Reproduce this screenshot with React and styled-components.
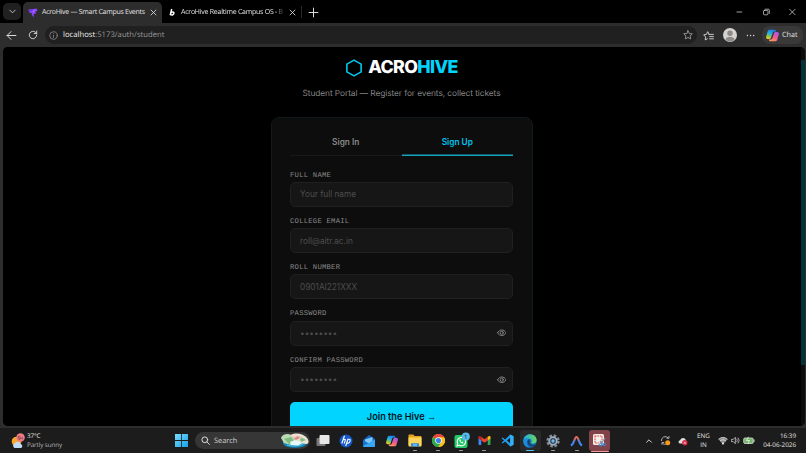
import React, { useState } from 'react'
import styled, { createGlobalStyle } from 'styled-components'

const GlobalStyle = createGlobalStyle`
    * { box-sizing: border-box; }
    body {
        margin: 0;
        background: #000;
        overflow: hidden;
    }
    button, input { font: inherit; }
`

const Desktop = styled.div`
    width: 806px;
    height: 453px;
    display: flex;
    flex-direction: column;
    background: #2d2d2d;
    font-family: "Open Sans", "Noto Sans", sans-serif;
    font-size: 7.2px;
    color: #e4e4e4;
    overflow: hidden;
    white-space: nowrap;
    text-rendering: geometricPrecision;
`

/* browser frame */

const TabStrip = styled.div`
    height: 23px;
    flex: none;
    display: flex;
    background: #000;
    padding-left: 3px;
`

const TabMenu = styled.div`
    width: 18px;
    height: 17px;
    margin-top: 3px;
    border-radius: 5px;
    background: #202020;
    display: flex;
    align-items: center;
    justify-content: center;
`

const Tab = styled.div`
    width: ${props => props.$width}px;
    height: 21px;
    margin: 2px 0 0 ${props => (props.$active ? 2 : 0)}px;
    padding: 0 5px 0 ${props => (props.$active ? 5 : 7)}px;
    border-radius: 5px 5px 0 0;
    background: ${props => (props.$active ? '#2d2d2d' : 'transparent')};
    display: flex;
    align-items: center;
    gap: 4px;
`

const TabTitle = styled.div`
    flex: 1;
    font-size: 7px;
    line-height: 12px;
    letter-spacing: ${props => props.$spacing}px;
    ${props => props.$fade && 'margin-left: 1px; mask-image: linear-gradient(90deg, #000 88%, rgba(0, 0, 0, 0.1));'}
`

const NewTab = styled.div`
    width: 24px;
    height: 12px;
    margin-top: 6px;
    border-left: 1px solid #292929;
    display: flex;
    align-items: center;
    justify-content: center;
`

const WindowButtons = styled.div`
    margin-left: auto;
    display: flex;
    align-items: center;

    svg { width: 26.7px; }
`

const Toolbar = styled.div`
    height: 24px;
    flex: none;
    display: flex;
    align-items: center;
    padding: 0 3px 0 6px;
    background: #2d2d2d;
`

const NavIcon = styled.div`
    width: ${props => props.$width || 21}px;
    display: flex;
    align-items: center;
    justify-content: center;
`

const AddressBar = styled.div`
    width: 652px;
    height: 18px;
    margin-left: -3px;
    padding: 0 4px 0 4px;
    border-radius: 9px;
    background: #202020;
    display: flex;
    align-items: center;
    gap: 5px;
    font-size: 7.7px;
    line-height: 12px;
    color: #999;

    b { font-weight: 400; color: #eee; }
    svg:last-child { margin-left: auto; }
`

const ChatPill = styled.div`
    width: 41px;
    height: 18px;
    margin-left: auto;
    border-radius: 8px;
    background: #393939;
    display: flex;
    align-items: center;
    gap: 3px;
    padding-left: 4px;
    font-size: 7.2px;
`

const PageFrame = styled.div`
    height: 379px;
    flex: none;
    margin: 0 1px 0 3px;
    border-radius: 5px;
    overflow: hidden;
    display: flex;
    background: #000;
`

const Scrollbar = styled.div`
    width: 4px;
    padding-top: 13px;
    background: #0c0c0c;

    &::before {
        content: '';
        display: block;
        height: 305px;
        background: #02333b;
    }
`

/* sign up page */

const Page = styled.main`
    flex: 1;
    height: 379px;
    display: flex;
    flex-direction: column;
    align-items: center;
    padding: 11px 1px 0 0;
    background: #000;
    font-family: Inter, sans-serif;
`

const Brand = styled.h1`
    margin: 0;
    height: 20px;
    display: flex;
    align-items: center;
    gap: 5px;
    font-size: 17.8px;
    line-height: 20px;
    font-weight: 800;
    letter-spacing: -0.62px;
    color: #fff;

    span span { color: #00d4ff; }
`

const Tagline = styled.p`
    margin: 11px 0 0;
    height: 10px;
    line-height: 10px;
    font-size: 8.35px;
    letter-spacing: -0.08px;
    color: #858585;
`

const Card = styled.form`
    width: 262px;
    height: 330px;
    flex: none;
    margin-top: 18px;
    padding: 10px 18.5px 0;
    border: 1px solid #10191b;
    border-radius: 8px;
    background: #0d0d0d;
`

const FormTabs = styled.div`
    display: grid;
    grid-template-columns: 1fr 1fr;
    height: 28px;
    margin-bottom: 15.5px;
`

const FormTab = styled.button`
    border: 0;
    box-shadow: inset 0 ${props => (props.$active ? '-1.5px #12a3bd' : '-1px #191919')};
    padding: 0;
    background: none;
    color: ${props => (props.$active ? '#00c4ec' : '#888')};
    font-size: 8.3px;
    font-weight: 600;
`

const Field = styled.label`
    display: block;
    height: 46.3px;
`

const FieldLabel = styled.div`
    height: 10.3px;
    line-height: 8px;
    font-family: "Liberation Mono", monospace;
    font-size: 7.2px;
    letter-spacing: 0.25px;
    text-transform: uppercase;
    color: #898989;
`

const InputBox = styled.div`
    height: 25px;
    display: flex;
    align-items: center;
    padding: 0 6px 0 9px;
    border: 1px solid #202020;
    border-radius: 5px;
    background: #161616;
`

const Input = styled.input`
    flex: 1;
    min-width: 0;
    border: 0;
    padding: 0;
    outline: 0;
    background: none;
    color: #ddd;
    font-size: 8.25px;

    &::placeholder { color: #4d4d4d; opacity: 1; }
`

const Submit = styled.button`
    width: 100%;
    height: 29px;
    margin-top: -1px;
    border: 0;
    border-radius: 5px;
    background: #00d4ff;
    color: #001115;
    font-size: 9.2px;
    font-weight: 600;
`

const Arrow = styled.span`
    font-family: "Liberation Sans", sans-serif;
    font-weight: 400;
    font-size: 9.2px;
`

/* taskbar */

const Taskbar = styled.footer`
    height: 25px;
    flex: none;
    margin-top: 2px;
    display: flex;
    align-items: center;
    background: #1c1c1c;
    font-size: 6.3px;
    line-height: 8.4px;
`

const Weather = styled.div`
    width: 170px;
    padding-left: 11px;
    display: flex;
    align-items: center;
    gap: 2px;
    letter-spacing: -0.1px;
`

const Muted = styled.div`
    color: #b5b5b5;
`

const StartButton = styled.div`
    width: 25px;
    display: flex;
    justify-content: center;
    padding-right: 2px;
`

const Search = styled.div`
    width: 115px;
    height: 17px;
    padding: 0 1px 0 6px;
    border-radius: 9px;
    background: #363636;
    display: flex;
    align-items: center;
    gap: 4px;
    font-size: 7.4px;
    line-height: 10px;
    color: #d0d0d0;

    svg:last-child { margin-left: auto; }
`

const Apps = styled.div`
    display: grid;
    grid-template-columns: repeat(13, 23.05px);
    margin-left: 1.5px;
`

const TaskApp = styled.div`
    height: 25px;
    display: flex;
    align-items: center;
    justify-content: center;
    position: relative;

    &::after {
        content: '';
        position: absolute;
        bottom: ${props => (props.$state === 'focus' ? 1 : 2)}px;
        width: ${props => ({ open: 4, active: 8, focus: 18 }[props.$state] || 0)}px;
        height: 1.5px;
        border-radius: 1px;
        background: ${props => ({ open: '#9b9b9b', active: '#4cc2ff', focus: '#f59a9e' }[props.$state])};
    }
`

const AppPlate = styled.div`
    width: 21px;
    height: 21px;
    border-radius: 3px;
    background: ${props => props.$color || 'transparent'};
    display: flex;
    align-items: center;
    justify-content: center;
`

const Tray = styled.div`
    margin-left: auto;
    padding-right: 10px;
    display: flex;
    align-items: center;
`

const Language = styled.div`
    width: 20px;
    margin: 0 3.5px;
    text-align: center;
`

const Clock = styled.div`
    width: 39px;
    text-align: right;
`

const Line = ({ size = 10, box = 10, d, color = '#ddd', width = 0.9, children }) => (
    <svg width={size} height={size} viewBox={`0 0 ${box} ${box}`} fill="none" stroke={color} strokeWidth={width} strokeLinecap="round" strokeLinejoin="round">
        {d && <path d={d} />}
        {children}
    </svg>
)

const Close = () => <Line size={7} d="M1.5 1.5l7 7M8.5 1.5l-7 7" width={1.2} />

const Copilot = ({ size = 13, id }) => (
    <svg width={size} height={size} viewBox="0 0 14 14">
        <defs>
            <linearGradient id={`${id}a`} x1="0.6" y1="0" x2="0.3" y2="1">
                <stop offset="0" stopColor="#1b7df0" />
                <stop offset="0.45" stopColor="#27b5da" />
                <stop offset="0.75" stopColor="#8fc648" />
                <stop offset="1" stopColor="#f7c52b" />
            </linearGradient>
            <linearGradient id={`${id}b`} x1="0.7" y1="0" x2="0.3" y2="1">
                <stop offset="0" stopColor="#a55bea" />
                <stop offset="0.5" stopColor="#ee5598" />
                <stop offset="1" stopColor="#ff9a55" />
            </linearGradient>
        </defs>
        <path d="M4 .8h5.200c1.200 0 1.500.8 1.800 2H8.800C7.700 2.800 7.300 3.600 7 4.600L5.600 9c-.4 1.200-.8 1.800-2 1.800H2C.5 10.800-.2 9.400.2 8L1.800 2.700C2.200 1.400 2.800.8 4 .8z" fill={`url(#${id}a)`} />
        <path d="M10 13.200H4.800c-1.200 0-1.500-.8-1.800-2h2.200c1.100 0 1.500-.8 1.800-1.800L8.400 5c.4-1.200.8-1.800 2-1.800H12c1.500 0 2.200 1.400 1.800 2.800L12.200 11.300c-.4 1.300-1 1.900-2.200 1.900z" fill={`url(#${id}b)`} />
    </svg>
)

const Favicon = () => (
    <svg width="10" height="10" viewBox="0 0 10 10">
        <path d="M.4 1.800L8.600.5 9.500 3 7.200 3.600 8.200 5.200 5.600 6.200 5.900 9.600 3.500 6.600 4 5 1.700 4.900z" fill="#8b45ff" />
        <path d="M.4 1.800L5 1.100 3.800 3.400 1.500 4z" fill="#6b3be8" />
        <path d="M4.500 2.900l3.600-.7-2.300 2z" fill="#b66bff" />
    </svg>
)

const BoltIcon = () => (
    <svg width="7" height="9" viewBox="0 0 7 9">
        <path d="M2.700 1L1.200 7.200M1.700 5.200C2.600 3.600 5.100 3.300 4.900 5.200 4.700 7.200 2.300 7.700 1.600 6.200" fill="none" stroke="#fff" strokeWidth="1.500" />
    </svg>
)

const Eye = () => (
    <Line size={9.5} box={24} width={2.4} color="#858585">
        <path d="M1.500 12C5.500 2.500 18.500 2.500 22.500 12 18.500 21.500 5.500 21.500 1.500 12z" />
        <circle cx="12" cy="12" r="4" />
    </Line>
)

const WeatherIcon = () => (
    <svg width="14" height="16" viewBox="0 0 14 16">
        <circle cx="5.500" cy="8.500" r="4.800" fill="#f7a72c" />
        <path d="M3.500 15a2.500 2.500 0 0 1 0-4.500 3.500 3.500 0 0 1 6.200.5 2.100 2.100 0 0 1 .3 4z" fill="#bfdcf7" />
        <circle cx="9.500" cy="4.500" r="4.300" fill="#ef7b83" />
        <text x="9.500" y="6.600" fontSize="5.500" textAnchor="middle" fill="#38191c">9+</text>
    </svg>
)

const WindowsLogo = () => (
    <svg width="13" height="13" viewBox="0 0 13 13">
        <defs>
            <linearGradient id="win" x2="1" y2="1">
                <stop stopColor="#79dcfb" />
                <stop offset="1" stopColor="#169fe8" />
            </linearGradient>
        </defs>
        <path d="M0 0h6.100v6.100H0zM6.900 0H13v6.100H6.900zM0 6.900h6.100V13H0zM6.900 6.900H13V13H6.900z" fill="url(#win)" />
    </svg>
)

const SearchArt = () => (
    <svg width="28" height="15" viewBox="0 0 28 15">
        <ellipse cx="14" cy="10" rx="12" ry="4.800" fill="#1387b8" />
        <path d="M0 5C1 1 7 0 10 2l5 6-5 4-7-2z" fill="#b9dcb5" />
        <path d="M10 2c5-3 13-1 16 3 2 3 2 5 0 6l-9-1z" fill="#e9e4d2" />
        <path d="M3 6l7-2 4 5-6 2zM18 3l7 4-5 2z" fill="#7fbb80" />
        <path d="M9 2l5-1 7 4-5 2z" fill="#f7d7cf" />
        <path d="M13 5l4-2 2 2-4 2z" fill="#e08a80" />
        <path d="M9 9l5-2 7 3-4 3-7-1z" fill="#e8f7fa" />
        <path d="M6 12c4 1 11 2 16-1" stroke="#55c9e6" fill="none" />
    </svg>
)

const TaskView = () => (
    <svg width="14" height="13" viewBox="0 0 14 13">
        <rect x="0.500" y="4" width="9" height="8" rx="1" fill="#777" />
        <rect x="3.500" y="1" width="10" height="9" rx="1" fill="#e7e7e7" />
    </svg>
)

const Hp = () => (
    <svg width="14" height="14" viewBox="0 0 14 14">
        <circle cx="7" cy="7" r="6.500" fill="#1458c8" />
        <path d="M5.500 1.800L2.800 9.500M4.200 5.800C6.500 4.500 6.600 5.500 6.200 6.600L5.200 9.500M9 5L6.700 12M8.800 5.300h1.400c1.200 0 1.100.8.8 1.800-.5 1.700-.8 2-1.800 2H7.800" fill="none" stroke="#fff" strokeWidth="1.100" />
    </svg>
)

const Mail = () => (
    <svg width="14" height="14" viewBox="0 0 14 14">
        <path d="M1 6l6-5 6 4v7.500H1z" fill="#1264c4" />
        <path d="M3 5.500l7.500-2.500v6H3z" fill="#7cc8f8" />
        <path d="M1 6l6 3.500L13 5.500v6c0 1-.5 1.500-1.500 1.500h-9C1.500 13 1 12.500 1 11.500z" fill="#1673d2" />
        <path d="M1 12l6-3 6-3.500v6c0 1-.5 1.500-1.500 1.500h-9C1.700 13 1.200 12.600 1 12z" fill="#38a6f2" />
    </svg>
)

const Folder = () => (
    <svg width="14" height="13" viewBox="0 0 14 13">
        <path d="M.5 1.500c0-.6.300-1 1-1h3.700L6.600 2h6c.6 0 .9.300.9.900V11H.5z" fill="#e5a51e" />
        <path d="M.5 3.500h13v8c0 .6-.3 1-1 1h-11c-.7 0-1-.4-1-1z" fill="#ffd45c" />
        <path d="M3 12.500V10.200c0-.7.300-1 1-1h6c.7 0 1 .3 1 1v2.300z" fill="#258cdb" />
        <path d="M5 11h4" stroke="#d8efff" strokeWidth="0.800" />
    </svg>
)

const Chrome = () => (
    <svg width="13" height="13" viewBox="0 0 24 24">
        <circle cx="12" cy="12" r="12" fill="#fbc116" />
        <path d="M12 12L1.600 6A12 12 0 0 1 22.400 6z" fill="#e8453c" />
        <path d="M1.600 6A12 12 0 0 0 12 24l5.200-9L12 12z" fill="#2da94f" />
        <path d="M12 6h10.400A12 12 0 0 1 12 24l5.200-9z" fill="#fbc116" />
        <circle cx="12" cy="12" r="6" fill="#fff" />
        <circle cx="12" cy="12" r="4.700" fill="#3a7ee8" />
    </svg>
)

const WhatsApp = () => (
    <svg width="18" height="18" viewBox="0 0 18 18" overflow="visible">
        <rect x="2.500" y="3" width="13" height="13" rx="2" fill="#21c865" />
        <path d="M5 14l.7-2.400a4.200 4.200 0 1 1 1.700 1.700z" fill="none" stroke="#fff" strokeWidth="1.100" />
        <path d="M7.200 8c.4 1.800 1.600 3 3.500 3.400l.8-1-1.300-.8-.6.6-1.200-1.300.5-.6-.7-1.200z" fill="#fff" />
        <circle cx="13.800" cy="4.500" r="4" fill="#55bbea" />
        <text x="13.800" y="6.700" fontSize="6" textAnchor="middle" fill="#12313e">1</text>
    </svg>
)

const Gmail = () => (
    <svg width="13" height="11" viewBox="0 0 13 11">
        <path d="M.5 2.500L3.300 4.500V10H1.500c-.6 0-1-.4-1-1z" fill="#4285f4" />
        <path d="M12.500 2.500L9.700 4.500V10h1.800c.6 0 1-.4 1-1z" fill="#34a853" />
        <path d="M3.300 1.800L6.500 4.300 9.700 1.800v3.600L6.500 7.800 3.300 5.400z" fill="#ea4335" />
        <path d="M.5 2.300C.5.800 2 .500 3.300 1.800v3.600L.5 3.400z" fill="#c5221f" />
        <path d="M12.500 2.300C12.500.8 11 .5 9.700 1.800v3.600l2.800-2z" fill="#fbbc04" />
    </svg>
)

const VsCode = () => (
    <svg width="13" height="13" viewBox="0 0 24 24">
        <path d="M17 1l6 3v16l-6 3L7.500 14 3 17.500 1 16.300 5.500 12 1 7.700 3 6.500 7.500 10zM17 7l-6.200 5 6.200 5z" fill="#239cea" fillRule="evenodd" />
        <path d="M17 1l6 3v16l-6 3z" fill="#36b0f5" />
    </svg>
)

const Edge = () => (
    <svg width="14" height="14" viewBox="0 0 24 24">
        <defs>
            <linearGradient id="edgeTop" x2="1">
                <stop stopColor="#25a9e5" />
                <stop offset="1" stopColor="#65d95c" />
            </linearGradient>
        </defs>
        <circle cx="12" cy="12" r="11.500" fill="#1269bd" />
        <path d="M.6 11.500C1 4.500 6.500.5 12 .5c7 0 11.500 5 11.500 9.800 0 4-3 6.200-6.500 6.200-2.500 0-3.800-1-3-2.200 2-3-.6-6-4.500-6C5 8.300 1.500 10 .6 13z" fill="url(#edgeTop)" />
        <path d="M9.500 9.500C6.500 12 7.500 20 14.500 21c3 .3 5.500-1 7-3-6 2.500-12-1-10-6.500z" fill="#1c1f24" opacity="0.600" />
        <path d="M.5 12C1 7 7 6.500 10 8.500 5.500 10 5 18.500 11 23.400 4.500 23.200.2 18 .5 12z" fill="#1b8edc" />
    </svg>
)

const Gear = () => (
    <svg width="14" height="14" viewBox="0 0 24 24">
        <circle cx="12" cy="12" r="9.500" fill="none" stroke="#7e8b98" strokeWidth="4" strokeDasharray="4.500 2.960" />
        <circle cx="12" cy="12" r="6.500" fill="#33445a" stroke="#a4b1bd" strokeWidth="3" />
        <circle cx="12" cy="12" r="2.800" fill="#6cb9f2" />
    </svg>
)

const Arc = () => (
    <svg width="13" height="13" viewBox="0 0 13 13">
        <defs>
            <linearGradient id="arc" x1="0" y1="0" x2="0" y2="1">
                <stop stopColor="#f2694a" />
                <stop offset="0.350" stopColor="#a56f8b" />
                <stop offset="0.600" stopColor="#3f86f0" />
            </linearGradient>
        </defs>
        <path d="M1.700 11C4 9.500 4.600 3 6.500 3s2.500 6.500 4.800 8" fill="none" stroke="url(#arc)" strokeWidth="2.200" strokeLinecap="round" />
    </svg>
)

const Snip = () => (
    <svg width="15" height="15" viewBox="0 0 15 15">
        <rect x="1" y="1" width="11" height="11" rx="1.500" fill="#f4eeee" />
        <rect x="3" y="3" width="7" height="7" fill="none" stroke="#dc4e3d" strokeWidth="1.100" strokeDasharray="1.600 0.800" />
        <path d="M13 5l-4 6M8 8l4 4" stroke="#8195a9" strokeWidth="1.300" />
        <circle cx="8.500" cy="12" r="1.300" fill="none" stroke="#3d8cdc" />
        <circle cx="12.500" cy="11.500" r="1.300" fill="none" stroke="#3d8cdc" />
    </svg>
)

const apps = [
    { name: 'taskview', icon: <TaskView /> },
    { name: 'hp', icon: <Hp /> },
    { name: 'mail', icon: <Mail /> },
    { name: 'copilot', icon: <Copilot id="task" size={12} /> },
    { name: 'files', icon: <Folder />, state: 'open' },
    { name: 'chrome', icon: <Chrome />, state: 'open' },
    { name: 'whatsapp', icon: <WhatsApp />, state: 'open' },
    { name: 'gmail', icon: <Gmail />, state: 'open' },
    { name: 'code', icon: <VsCode /> },
    { name: 'edge', icon: <Edge />, state: 'active', plate: '#292929' },
    { name: 'settings', icon: <Gear />, state: 'open' },
    { name: 'arc', icon: <Arc />, state: 'open' },
    { name: 'snip', icon: <Snip />, state: 'focus', plate: '#81424a' },
]

const fields = [
    { label: 'Full Name', placeholder: 'Your full name' },
    { label: 'College Email', placeholder: 'roll@aitr.ac.in' },
    { label: 'Roll Number', placeholder: '0901AI221XXX' },
    { label: 'Password', placeholder: '••••••••', secret: true },
    { label: 'Confirm Password', placeholder: '••••••••', secret: true },
]

const BrowserBar = () => (
    <React.Fragment>
        <TabStrip>
            <TabMenu><Line size={9} d="M2 3.500l3 3 3-3" /></TabMenu>
            <Tab $active $width={139}>
                <Favicon />
                <TabTitle $spacing={-0.28}>AcroHive — Smart Campus Events</TabTitle>
                <Close />
            </Tab>
            <Tab $width={139}>
                <BoltIcon />
                <TabTitle $spacing={-0.25} $fade>AcroHive Realtime Campus OS - B</TabTitle>
                <Close />
            </Tab>
            <NewTab><Line size={11} d="M5 1v8M1 5h8" /></NewTab>
            <WindowButtons>
                <Line size={8} d="M2 5h6" />
                <Line size={8}>
                    <rect x="1.500" y="3" width="5.500" height="5.500" rx="1" />
                    <path d="M3.500 1.500h4c.8 0 1.200.4 1.200 1.200v4" />
                </Line>
                <Line size={8} d="M1.500 1.500l7 7M8.500 1.500l-7 7" />
            </WindowButtons>
        </TabStrip>
        <Toolbar>
            <NavIcon $width={11}><Line size={11} d="M9 5H1M4.500 1.500L1 5l3.500 3.500" /></NavIcon>
            <NavIcon $width={31}><Line size={10} d="M8.700 5A3.700 3.700 0 1 1 7.500 2.300L8.700 3.500M8.700 1v2.500H6.200" /></NavIcon>
            <AddressBar>
                <Line size={9} color="#999" width={0.8}>
                    <circle cx="5" cy="5" r="4.200" />
                    <path d="M5 4.700v2.500M5 2.900v.1" />
                </Line>
                <span><b>localhost</b>:5173/auth/student</span>
                <Line size={10} color="#aaa" width={0.8} d="M5 .7l1.300 2.800 3 .3-2.200 2.100.6 3L5 7.500 2.300 8.900l.6-3L.7 3.800l3-.3z" />
            </AddressBar>
            <NavIcon $width={22}>
                <Line size={11} width={0.8} d="M4 8L2 9l.4-2.700L.6 4.400l2.500-.4L4.300 1.500 5.500 4M5.500 4h4M6 6h3.500M6 8h3.500" />
            </NavIcon>
            <NavIcon>
                <svg width="14" height="14" viewBox="0 0 14 14">
                    <circle cx="7" cy="7" r="7" fill="#d5d2cf" />
                    <circle cx="7" cy="5.300" r="2.700" fill="#8c8986" />
                    <path d="M2.500 11.500C3 7.800 11 7.800 11.500 11.500 9 14 5 14 2.500 11.500z" fill="#8c8986" />
                </svg>
            </NavIcon>
            <NavIcon><Line size={9} width={1.4} d="M1.500 5h.1M5 5h.1M8.500 5h.1" /></NavIcon>
            <ChatPill><Copilot id="chat" size={13} />Chat</ChatPill>
        </Toolbar>
    </React.Fragment>
)

const AuthPage = () => {
    const [tab, setTab] = useState('Sign Up')

    return (
        <Page>
            <Brand>
                <svg width="18" height="18" viewBox="0 0 24 24" fill="none" stroke="#00c4ec" strokeWidth="2.200" strokeLinejoin="round">
                    <path d="M12 1.500l9.500 5.300v10.400L12 22.500l-9.500-5.300V6.800z" />
                </svg>
                <span>ACRO<span>HIVE</span></span>
            </Brand>
            <Tagline>Student Portal — Register for events, collect tickets</Tagline>
            <Card onSubmit={e => e.preventDefault()}>
                <FormTabs>
                    {['Sign In', 'Sign Up'].map(name => (
                        <FormTab type="button" key={name} $active={tab === name} onClick={() => setTab(name)}>{name}</FormTab>
                    ))}
                </FormTabs>
                {fields.map(field => (
                    <Field key={field.label}>
                        <FieldLabel>{field.label}</FieldLabel>
                        <InputBox>
                            <Input type={field.secret ? 'password' : 'text'} placeholder={field.placeholder} />
                            {field.secret && <Eye />}
                        </InputBox>
                    </Field>
                ))}
                <Submit>Join the Hive <Arrow>→</Arrow></Submit>
            </Card>
        </Page>
    )
}

const TaskbarRow = () => (
    <Taskbar>
        <Weather>
            <WeatherIcon />
            <div>
                <div>37°C</div>
                <Muted>Partly sunny</Muted>
            </div>
        </Weather>
        <StartButton><WindowsLogo /></StartButton>
        <Search>
            <Line size={9} width={1.1}>
                <circle cx="4.200" cy="4.200" r="3.200" />
                <path d="M6.600 6.600L9.300 9.300" />
            </Line>
            Search
            <SearchArt />
        </Search>
        <Apps>
            {apps.map(app => (
                <TaskApp key={app.name} $state={app.state}>
                    <AppPlate $color={app.plate}>{app.icon}</AppPlate>
                </TaskApp>
            ))}
        </Apps>
        <Tray>
            <NavIcon $width={14}><Line size={8} width={1.2} d="M2 6.500l3-3 3 3" /></NavIcon>
            <NavIcon $width={19}>
                <svg width="11" height="11" viewBox="0 0 11 11">
                    <path d="M1.500 6A3.800 3.800 0 0 1 8 2.800M9 1v2.300H6.700M2 9.800V7.500h2.300M2.300 8C3 9 4 9.500 5.500 9.500" fill="none" stroke="#bbb" strokeWidth="0.900" />
                    <circle cx="7.700" cy="7.700" r="2.500" fill="#f79a1c" />
                </svg>
            </NavIcon>
            <NavIcon $width={15}>
                <svg width="10" height="10" viewBox="0 0 10 10">
                    <path d="M2 7.500C0 7 .2 4.300 2.200 4.200 3 1.300 7 1.300 7.800 4L9 7.500z" fill="#e0e0e0" />
                    <circle cx="6.800" cy="6.800" r="2.700" fill="#d92d49" />
                    <path d="M5.900 5.900l1.800 1.800M7.700 5.900L5.900 7.700" stroke="#fff" strokeWidth="0.600" />
                </svg>
            </NavIcon>
            <Language>ENG<br />IN</Language>
            <NavIcon $width={12}>
                <svg width="10" height="9" viewBox="0 0 10 9">
                    <path d="M5 8.500L.5 3.300C3 .9 7 .9 9.500 3.300z" fill="#8b8b8b" />
                    <path d="M.5 3.300C3 .9 7 .9 9.500 3.300M2 5c1.800-1.600 4.200-1.600 6 0" fill="none" stroke="#e4e4e4" strokeWidth="0.800" />
                    <circle cx="5" cy="7.500" r="0.900" fill="#fff" />
                </svg>
            </NavIcon>
            <NavIcon $width={12}><Line size={9} width={0.8} d="M.8 3.800h1.700L4.800 1.500v7L2.500 6.200H.8zM6.300 3.500c.9 1 .9 2 0 3M7.800 2.200c1.600 1.800 1.600 3.800 0 5.600" /></NavIcon>
            <NavIcon $width={16}>
                <svg width="12" height="9" viewBox="0 0 12 9">
                    <rect x="0.700" y="2" width="9.500" height="5.500" rx="1.300" fill="#74b56b" stroke="#d5ddd4" strokeWidth="0.800" />
                    <path d="M11 3.500v2.500" stroke="#d5ddd4" />
                    <path d="M5.500.8L3.500 4.500h3L5 8" fill="none" stroke="#eef8ed" strokeWidth="0.800" />
                </svg>
            </NavIcon>
            <Clock>16:39<br />04-06-2026</Clock>
        </Tray>
    </Taskbar>
)

const App = () => (
    <Desktop>
        <GlobalStyle />
        <BrowserBar />
        <PageFrame>
            <AuthPage />
            <Scrollbar />
        </PageFrame>
        <TaskbarRow />
    </Desktop>
)

export default App
